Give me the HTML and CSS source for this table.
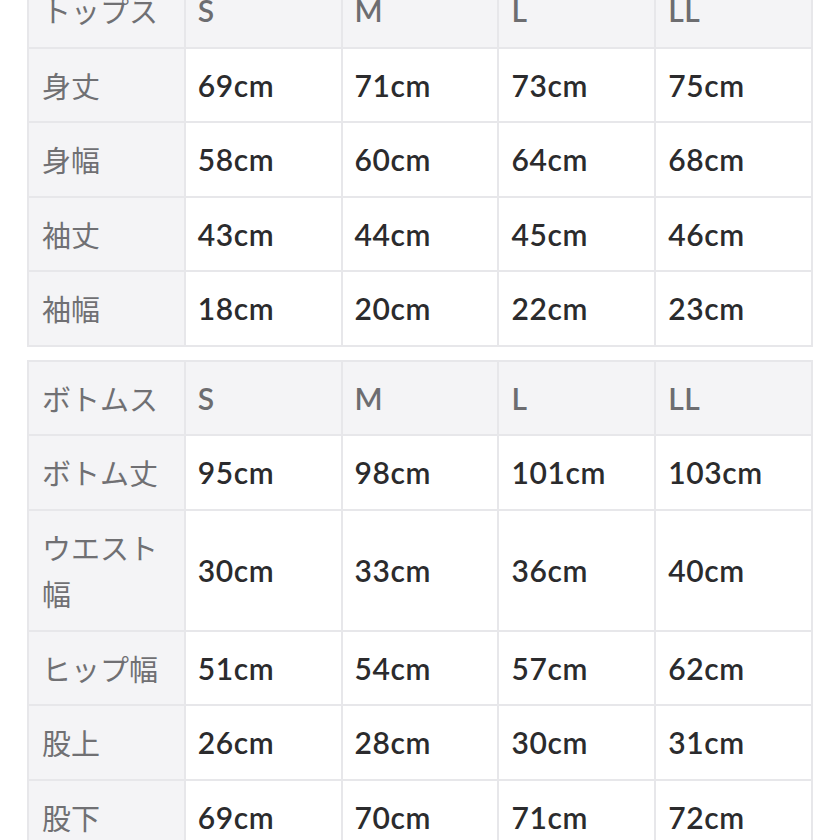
FILE: index.html
```html
<!DOCTYPE html>
<html lang="ja">
<head>
<meta charset="utf-8">
<title>サイズ表</title>
<link rel="stylesheet" href="styles.css">
</head>
<body>
<div class="page">
  <table class="size-table tops">
    <thead>
      <tr><th class="label">トップス</th><th>S</th><th>M</th><th>L</th><th>LL</th></tr>
    </thead>
    <tbody>
      <tr><th class="label">身丈</th><td>69cm</td><td>71cm</td><td>73cm</td><td>75cm</td></tr>
      <tr><th class="label">身幅</th><td>58cm</td><td>60cm</td><td>64cm</td><td>68cm</td></tr>
      <tr><th class="label">袖丈</th><td>43cm</td><td>44cm</td><td>45cm</td><td>46cm</td></tr>
      <tr><th class="label">袖幅</th><td>18cm</td><td>20cm</td><td>22cm</td><td>23cm</td></tr>
    </tbody>
  </table>
  <table class="size-table bottoms">
    <thead>
      <tr><th class="label">ボトムス</th><th>S</th><th>M</th><th>L</th><th>LL</th></tr>
    </thead>
    <tbody>
      <tr><th class="label">ボトム丈</th><td>95cm</td><td>98cm</td><td>101cm</td><td>103cm</td></tr>
      <tr><th class="label">ウエスト幅</th><td>30cm</td><td>33cm</td><td>36cm</td><td>40cm</td></tr>
      <tr><th class="label">ヒップ幅</th><td>51cm</td><td>54cm</td><td>57cm</td><td>62cm</td></tr>
      <tr><th class="label">股上</th><td>26cm</td><td>28cm</td><td>30cm</td><td>31cm</td></tr>
      <tr><th class="label">股下</th><td>69cm</td><td>70cm</td><td>71cm</td><td>72cm</td></tr>
    </tbody>
  </table>
</div>
</body>
</html>
```
FILE: styles.css
```css
html, body {
  margin: 0;
  padding: 0;
  background: #ffffff;
}
body {
  overflow: hidden;
}
.page {
  padding-left: 27px;
  margin-top: -28px;
  display: flex;
  flex-direction: column;
  gap: 13px;
}
.size-table {
  width: 786px;
  table-layout: fixed;
  border-collapse: collapse;
  font-family: "Lato", "Noto Sans CJK JP", sans-serif;
}
.size-table th,
.size-table td {
  border: 2px solid #e7e7ea;
  padding: 13px 12px 13px 12px;
  line-height: 46.5px;
  text-align: left;
  vertical-align: middle;
  font-size: 30px;
}
.size-table td {
  background: #ffffff;
  color: #2b2b2d;
  font-weight: 600;
  letter-spacing: 0.6px;
}
.size-table th {
  background: #f4f4f6;
  color: #6d6d70;
  font-weight: 600;
  letter-spacing: 0.6px;
}
.size-table th.label {
  font-family: "Noto Sans CJK JP", sans-serif;
  font-weight: 400;
  color: #707073;
  font-size: 29px;
  letter-spacing: 0;
  padding-left: 13px;
  padding-right: 14px;
}
```
